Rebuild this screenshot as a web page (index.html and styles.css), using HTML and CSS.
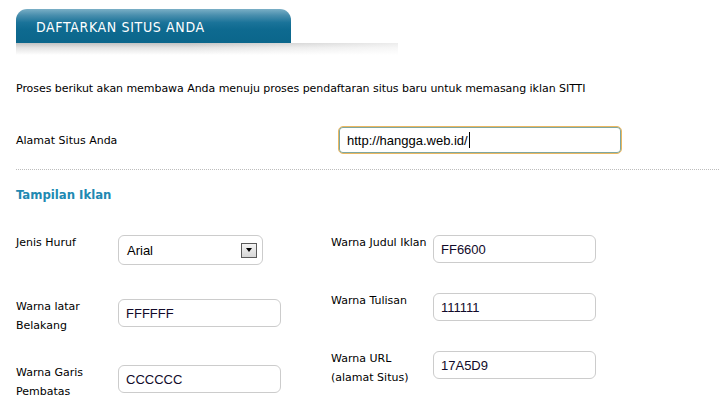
FILE: index.html
```html
<!DOCTYPE html>
<html lang="id">
<head>
<meta charset="utf-8">
<title>Daftarkan Situs Anda</title>
<link rel="stylesheet" href="styles.css">
</head>
<body>
<div class="page">
  <div class="header">
    <div class="tab">DAFTARKAN SITUS ANDA</div>
    <div class="tab-shadow"></div>
  </div>

  <p class="intro">Proses berikut akan membawa Anda menuju proses pendaftaran situs baru untuk memasang iklan SITTI</p>

  <div class="url-row">
    <label class="url-label">Alamat Situs Anda</label>
    <div class="url-input">http://hangga.web.id/<span class="caret"></span></div>
  </div>

  <div class="divider"></div>

  <h2 class="section-title">Tampilan Iklan</h2>

  <div class="grid">
    <div class="col col-left">
      <div class="field f-a">
        <div class="label">Jenis Huruf</div>
        <div class="select">
          <span>Arial</span>
          <span class="select-btn"><span class="arrow"></span></span>
        </div>
      </div>
      <div class="field f-b">
        <div class="label">Warna latar<br>Belakang</div>
        <div class="text-input">FFFFFF</div>
      </div>
      <div class="field">
        <div class="label">Warna Garis<br>Pembatas</div>
        <div class="text-input">CCCCCC</div>
      </div>
    </div>
    <div class="col col-right">
      <div class="field f-c">
        <div class="label">Warna Judul Iklan</div>
        <div class="text-input">FF6600</div>
      </div>
      <div class="field f-c">
        <div class="label">Warna Tulisan</div>
        <div class="text-input">111111</div>
      </div>
      <div class="field">
        <div class="label">Warna URL<br>(alamat Situs)</div>
        <div class="text-input">17A5D9</div>
      </div>
    </div>
  </div>
</div>
</body>
</html>
```

FILE: styles.css
```css
html, body {
  margin: 0;
  padding: 0;
  background: #fff;
}

body {
  font-family: "DejaVu Sans", sans-serif;
  font-size: 11px;
  color: #000;
}

.page {
  padding: 9px 0 0 16px;
}

.header {
  display: flex;
  flex-direction: column;
}

.tab {
  width: 255px;
  height: 31px;
  padding: 3px 0 0 20px;
  line-height: 31px;
  border-radius: 11px 11px 0 0;
  background: linear-gradient(to bottom, #7aafc6 0%, #4a8fae 18%, #1a7399 40%, #0e6a90 60%, #0b668b 100%);
  color: #fff;
  font-family: "DejaVu Sans Condensed", "DejaVu Sans", sans-serif;
  font-size: 14px;
  letter-spacing: 0.65px;
}

.tab-shadow {
  width: 382px;
  height: 12px;
  background:
    linear-gradient(to right, rgba(255,255,255,0) 0%, rgba(255,255,255,0) 45%, rgba(255,255,255,0.7) 100%),
    linear-gradient(to bottom, #c2c2c2 0%, #e4e4e4 40%, #ffffff 100%);
}

.intro {
  margin: 25px 0 0 0;
  line-height: 18px;
  letter-spacing: -0.05px;
}

.url-row {
  display: flex;
  align-items: center;
  margin-top: 28px;
}

.url-label {
  width: 322px;
}

.url-input {
  box-sizing: border-box;
  width: 284px;
  height: 28px;
  border: 1px solid #eab760;
  box-shadow: inset 0 0 0 1px #7ea7a0;
  border-radius: 5px;
  padding: 0 0 0 8px;
  display: flex;
  align-items: center;
  font-family: "Liberation Sans", Arial, sans-serif;
  font-size: 13px;
  color: #000;
}

.caret {
  display: inline-block;
  width: 1px;
  height: 16px;
  background: #000;
  margin-left: 1px;
}

.divider {
  margin-top: 15px;
  border-top: 1px dotted #bdbdbd;
}

.section-title {
  margin: 16px 0 0 0;
  font-family: "DejaVu Sans Condensed", "DejaVu Sans", sans-serif;
  font-size: 13px;
  line-height: 18px;
  font-weight: bold;
  color: #2189b2;
}

.grid {
  display: flex;
  margin-top: 29px;
}

.col {
  display: flex;
  flex-direction: column;
}

.col-left {
  width: 315px;
}

.field {
  display: flex;
  align-items: flex-start;
}

.f-a { height: 64px; }
.f-b { height: 66px; }
.f-c { height: 58px; }

.label {
  width: 102px;
  line-height: 19px;
  flex: none;
}

.text-input {
  box-sizing: border-box;
  width: 163px;
  height: 28px;
  margin-top: 2px;
  border: 1px solid #cccccc;
  border-radius: 6px;
  padding-left: 7px;
  display: flex;
  align-items: center;
  font-family: "Liberation Sans", Arial, sans-serif;
  font-size: 13px;
  color: #110a2a;
}

.select {
  box-sizing: border-box;
  width: 145px;
  height: 30px;
  margin-top: 2px;
  border: 1px solid #cccccc;
  border-radius: 6px;
  padding: 0 5px 0 8px;
  display: flex;
  align-items: center;
  justify-content: space-between;
  font-family: "Liberation Sans", Arial, sans-serif;
  font-size: 13px;
  color: #000;
}

.select-btn {
  box-sizing: border-box;
  width: 16px;
  height: 15px;
  border: 1px solid #5a5a5a;
  background: linear-gradient(to bottom, #f4f4f4, #d6d6d6);
  display: flex;
  align-items: center;
  justify-content: center;
}

.arrow {
  width: 0;
  height: 0;
  border-left: 3px solid transparent;
  border-right: 3px solid transparent;
  border-top: 4px solid #000;
}
```
